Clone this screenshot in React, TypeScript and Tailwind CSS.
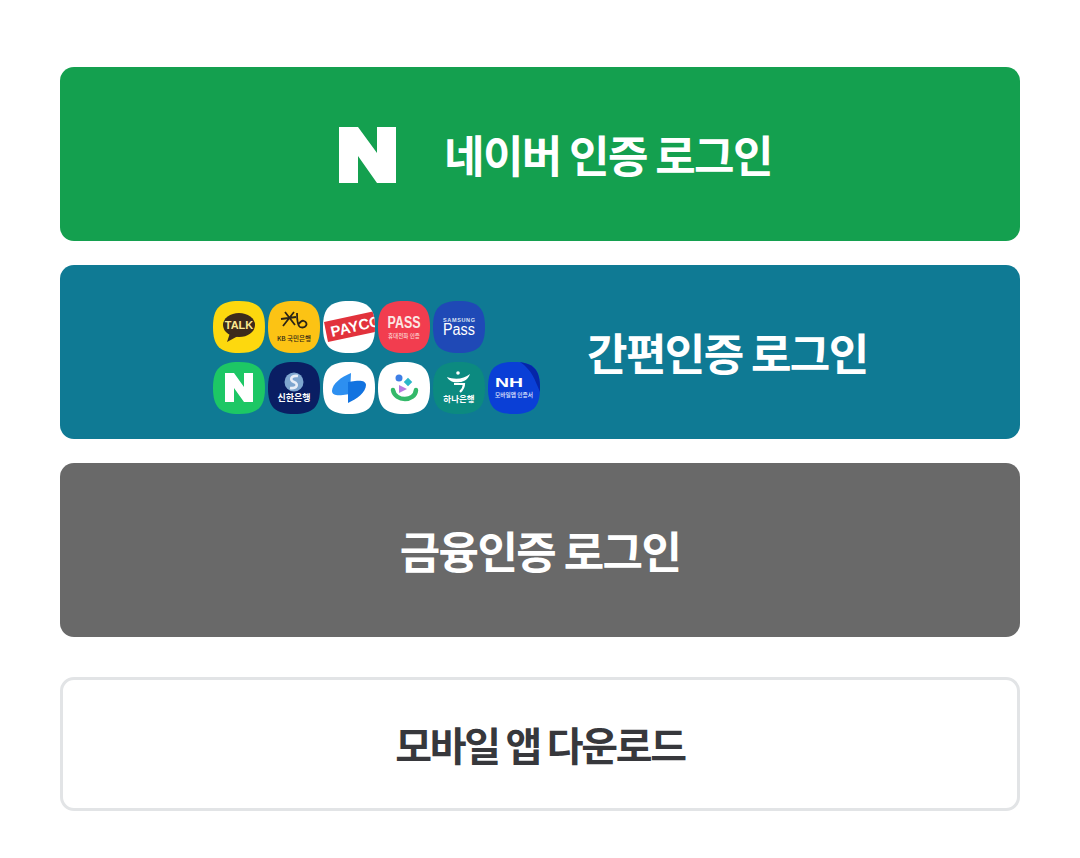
import { useId } from 'react'
import type { ReactNode } from 'react'

const SQUIRCLE = 'M26 0C45 0 52 7 52 26C52 45 45 52 26 52C7 52 0 45 0 26C0 7 7 0 26 0Z'
const LATIN = "'Liberation Sans', sans-serif"

function Tile({ fill, children }: { fill: string; children: ReactNode }) {
  const clipId = useId()
  return (
    <svg viewBox="0 0 52 52" width="52" height="52" className="shrink-0" fontFamily="'Noto Sans CJK KR', sans-serif">
      <clipPath id={clipId}>
        <path d={SQUIRCLE} />
      </clipPath>
      <g clipPath={`url(#${clipId})`}>
        <rect width="52" height="52" fill={fill} />
        {children}
      </g>
    </svg>
  )
}

function NaverMark() {
  return (
    <svg viewBox="0 0 57 56" width="57" height="56" className="shrink-0 mt-[2px]">
      <path d="M0 0H19L38 26V0H57V56H38L19 29V56H0Z" fill="#fff" />
    </svg>
  )
}

function AppGrid() {
  return (
    <div className="flex flex-col gap-[9px] w-[327px] mt-[11px]">
      <div className="flex gap-[3px]">
        <Tile fill="#fdd80e">
          <ellipse cx="26" cy="24" rx="16" ry="12" fill="#3c2a1c" />
          <path d="M17 32 L14 41 L25 35Z" fill="#3c2a1c" />
          <text x="26" y="28" textAnchor="middle" fontSize="11" fontWeight="700" fontFamily={LATIN} fill="#fbe88f">TALK</text>
        </Tile>
        <Tile fill="#fcc314">
          <path d="M13 18 L28 16 M17 11 L27 24 M26 11 L15 25" stroke="#2b2416" strokeWidth="1.8" fill="none" />
          <path d="M29 12 C29 19 30 25 32 26 C38 28 41 22 36 20 C34 19 32 21 30 24" stroke="#2b2416" strokeWidth="1.8" fill="none" />
          <text x="26" y="40" textAnchor="middle" fontSize="6.5" fontWeight="500" fill="#2b2416">KB 국민은행</text>
        </Tile>
        <Tile fill="#ffffff">
          <path d="M1 21 L52 10 V31 L5 41 Z" fill="#e2323c" />
          <text x="9" y="36" fontSize="15" fontWeight="700" fontFamily={LATIN} fill="#fff" transform="rotate(-13 9 36)">PAYCO</text>
        </Tile>
        <Tile fill="#f23d4f">
          <text x="26" y="27" textAnchor="middle" fontSize="16" fontWeight="700" fontFamily={LATIN} textLength="33" lengthAdjust="spacingAndGlyphs" fill="#fbe6e4">PASS</text>
          <text x="26" y="37" textAnchor="middle" fontSize="6" fontWeight="500" textLength="32" lengthAdjust="spacingAndGlyphs" fill="#fbd5d3">휴대전화 인증</text>
        </Tile>
        <Tile fill="#1f49b6">
          <text x="26" y="21" textAnchor="middle" fontSize="5.5" fontWeight="700" fontFamily={LATIN} textLength="32" fill="#d8e2f5">SAMSUNG</text>
          <text x="26" y="34" textAnchor="middle" fontSize="16" fontWeight="400" fontFamily={LATIN} textLength="32" lengthAdjust="spacingAndGlyphs" fill="#fff">Pass</text>
        </Tile>
      </div>
      <div className="flex gap-[3px]">
        <Tile fill="#1dc765">
          <path d="M12 11H21L31 25V11H40V40H31L21 26V40H12Z" fill="#fff" />
        </Tile>
        <Tile fill="#0a1e63">
          <circle cx="26" cy="20" r="9.5" fill="#7ea6cf" />
          <path d="M30 14 C23 13 21 18 26 20 C31 22 29 27 22 26" stroke="#e8eef7" strokeWidth="2.6" fill="none" />
          <text x="26" y="39" textAnchor="middle" fontSize="9" fontWeight="700" fill="#fff">신한은행</text>
        </Tile>
        <Tile fill="#ffffff">
          <path d="M28 11 C18 15 9 22 9 29 C9 33 14 34 20 33 L27 32Z" fill="#2d8ff0" />
          <path d="M25 41 C34 37 43 30 43 23 C43 19 38 18 32 19 L25 20Z" fill="#1273e0" />
        </Tile>
        <Tile fill="#ffffff">
          <circle cx="21" cy="16" r="3.5" fill="#3e7fe6" />
          <rect x="27" y="17" width="6" height="6" transform="rotate(45 30 20)" fill="#2ab7c9" />
          <path d="M21 23 L29 27 L21 31Z" fill="#b77be0" />
          <path d="M15 28 C17 40 37 40 38 28" stroke="#34b96a" strokeWidth="4.5" strokeLinecap="round" fill="none" />
        </Tile>
        <Tile fill="#0c8a80">
          <path d="M14 15 C22 18 31 17 37 12 C35 18 30 20 27 20 C20 21 16 19 14 15Z" fill="#fff" />
          <circle cx="25" cy="11" r="1.8" fill="#fff" />
          <path d="M21 22 H31 C31 25 29 28 27 30" stroke="#fff" strokeWidth="2.2" fill="none" />
          <text x="26" y="40" textAnchor="middle" fontSize="8.5" fontWeight="700" fill="#fff">하나은행</text>
        </Tile>
        <Tile fill="#0a3fd6">
          <path d="M32 0 H52 V30 C47 18 44 8 32 0Z" fill="#0526a8" />
          <text x="7" y="25" fontSize="13" fontWeight="700" fontFamily={LATIN} textLength="28" lengthAdjust="spacingAndGlyphs" fill="#fff">NH</text>
          <text x="7" y="35" fontSize="6" fontWeight="500" textLength="38" lengthAdjust="spacingAndGlyphs" fill="#e6edff">모바일앱 인증서</text>
        </Tile>
      </div>
    </div>
  )
}

export default function App() {
  return (
    <div className="w-[1080px] h-[858px] bg-white px-[60px] pt-[67px] font-['Noto_Sans_CJK_KR',sans-serif]">
      <button type="button" className="w-full h-[174px] rounded-[14px] bg-[#14a04f] flex items-center text-white pl-[279px]">
        <NaverMark />
        <span className="ml-[48px] text-[44px] font-bold tracking-[-1.6px] leading-none whitespace-nowrap">네이버 인증 로그인</span>
      </button>
      <button type="button" className="w-full h-[174px] mt-[24px] rounded-[14px] bg-[#0f7a94] flex items-center text-white pl-[153px]">
        <AppGrid />
        <span className="ml-[47px] text-[44px] font-bold tracking-[-1.6px] leading-none whitespace-nowrap">간편인증 로그인</span>
      </button>
      <button type="button" className="w-full h-[174px] mt-[24px] rounded-[14px] bg-[#696969] flex items-center justify-center text-white">
        <span className="text-[44px] font-bold tracking-[-1.6px] leading-none whitespace-nowrap">금융인증 로그인</span>
      </button>
      <button type="button" className="w-full h-[134px] mt-[40px] rounded-[14px] bg-white border-[3px] border-[#e2e4e6] flex items-center justify-center text-[#37383c]">
        <span className="text-[40px] font-bold tracking-[-2.3px] leading-none whitespace-nowrap">모바일 앱 다운로드</span>
      </button>
    </div>
  )
}
